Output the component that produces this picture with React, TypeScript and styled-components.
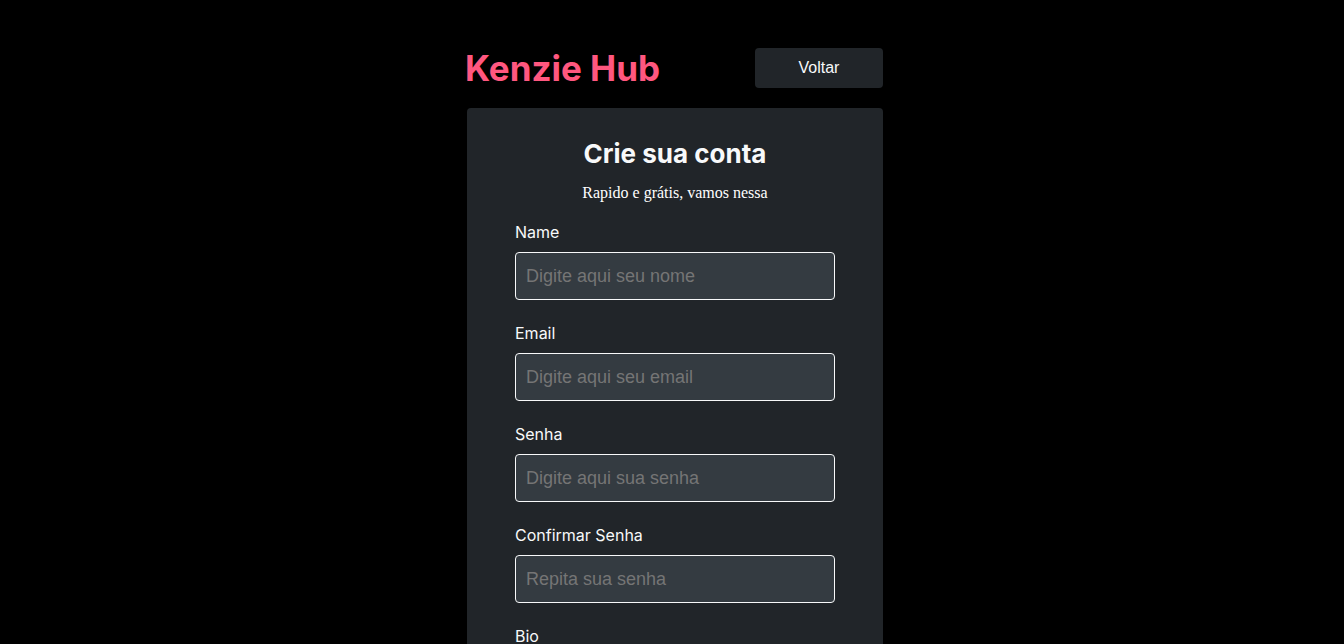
import React from "react";
import styled, { createGlobalStyle } from "styled-components";

const Global = createGlobalStyle`
  * { box-sizing: border-box; }
  body { margin: 0; background: #000000; font-family: Inter, "Liberation Sans", sans-serif; }
`;

const Page = styled.div`
  display: flex;
  flex-direction: column;
  align-items: center;
  padding-top: 48px;
  padding-left: 6px;
`;

const Header = styled.header`
  width: 416px;
  display: flex;
  justify-content: space-between;
  align-items: center;
  margin-bottom: 20px;
`;

const Logo = styled.h1`
  margin: 0 0 0 -2px;
  font-family: Inter, sans-serif;
  font-weight: 700;
  font-size: 35px;
  line-height: 40px;
  color: #ff577f;
`;

const BackButton = styled.button`
  width: 128px;
  height: 40px;
  border: none;
  border-radius: 4px;
  background: #212529;
  color: #f8f9fa;
  font-family: "Liberation Sans", Arial, sans-serif;
  font-size: 16px;
`;

const Card = styled.form`
  width: 416px;
  background: #212529;
  border-radius: 4px;
  padding: 30px 48px 40px;
  display: flex;
  flex-direction: column;
  align-items: stretch;
`;

const Title = styled.h2`
  margin: 0;
  text-align: center;
  font-family: Inter, sans-serif;
  font-weight: 700;
  font-size: 26px;
  line-height: 32px;
  color: #f8f9fa;
`;

const Subtitle = styled.p`
  margin: 14px 0 20px;
  text-align: center;
  font-family: "Liberation Serif", serif;
  font-size: 16px;
  line-height: 18px;
  color: #ffffff;
`;

const Field = styled.div`
  display: flex;
  flex-direction: column;
  gap: 10px;
  margin-bottom: 23px;
`;

const Label = styled.label`
  font-family: Inter, sans-serif;
  font-size: 16px;
  line-height: 20px;
  color: #f8f9fa;
`;

const Input = styled.input`
  width: 320px;
  height: 48px;
  background: #343b41;
  border: 1px solid #f8f9fa;
  border-radius: 4px;
  padding: 0 10px;
  font-family: "Liberation Sans", Arial, sans-serif;
  font-size: 18px;
  color: #f8f9fa;
  &::placeholder { color: #757575; }
`;

const fields = [
  { label: "Name", ph: "Digite aqui seu nome", type: "text" },
  { label: "Email", ph: "Digite aqui seu email", type: "email" },
  { label: "Senha", ph: "Digite aqui sua senha", type: "password" },
  { label: "Confirmar Senha", ph: "Repita sua senha", type: "password" },
  { label: "Bio", ph: "Fale sobre você", type: "text" },
];

export default function App() {
  return (
    <>
      <Global />
      <Page>
        <Header>
          <Logo>Kenzie Hub</Logo>
          <BackButton type="button">Voltar</BackButton>
        </Header>
        <Card onSubmit={(e) => e.preventDefault()}>
          <Title>Crie sua conta</Title>
          <Subtitle>Rapido e grátis, vamos nessa</Subtitle>
          {fields.map((f) => (
            <Field key={f.label}>
              <Label>{f.label}</Label>
              <Input type={f.type} placeholder={f.ph} />
            </Field>
          ))}
        </Card>
      </Page>
    </>
  );
}
